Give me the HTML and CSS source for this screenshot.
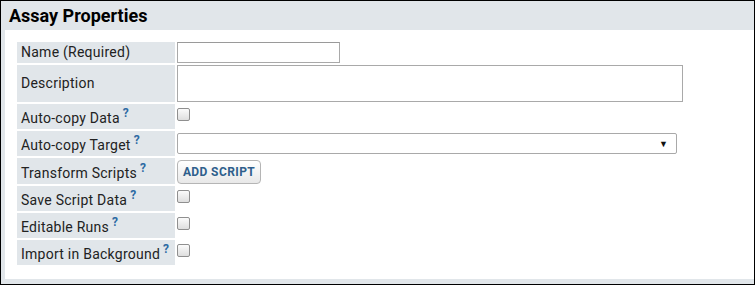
FILE: index.html
```html
<!DOCTYPE html>
<html lang="en">
<head>
    <meta charset="UTF-8">
    <title>Assay Properties</title>
    <link rel="stylesheet" href="styles.css">
</head>
<body>

    <div class="panel">
        <div class="panel-title">Assay Properties</div>

        <div class="panel-body">
            <table class="form-table">
                <tr>
                    <td class="form-label">Name (Required)</td>
                    <td class="form-value"><input type="text" class="text-input"></td>
                </tr>
                <tr>
                    <td class="form-label">Description</td>
                    <td class="form-value"><textarea class="text-area"></textarea></td>
                </tr>
                <tr>
                    <td class="form-label with-help">Auto-copy Data<sup class="help">?</sup></td>
                    <td class="form-value"><span class="check"></span></td>
                </tr>
                <tr>
                    <td class="form-label with-help">Auto-copy Target<sup class="help">?</sup></td>
                    <td class="form-value"><div class="select-box"><span class="arrow">&#9660;</span></div></td>
                </tr>
                <tr>
                    <td class="form-label with-help">Transform Scripts<sup class="help">?</sup></td>
                    <td class="form-value"><button class="add-btn">ADD SCRIPT</button></td>
                </tr>
                <tr>
                    <td class="form-label with-help">Save Script Data<sup class="help">?</sup></td>
                    <td class="form-value"><span class="check"></span></td>
                </tr>
                <tr>
                    <td class="form-label with-help">Editable Runs<sup class="help">?</sup></td>
                    <td class="form-value"><span class="check"></span></td>
                </tr>
                <tr>
                    <td class="form-label with-help">Import in Background<sup class="help">?</sup></td>
                    <td class="form-value"><span class="check"></span></td>
                </tr>
            </table>
        </div>
    </div>

</body>
</html>
```

FILE: styles.css
```css
* {
    margin: 0;
    padding: 0;
    box-sizing: border-box;
}

body {
    font-family: 'Roboto', 'Liberation Sans', sans-serif;
    background-color: #ffffff;
    color: #222222;
}

.panel {
    width: 755px;
    height: 285px;
    border: 1px solid #000000;
    background-color: #e1e6ea;
    display: flex;
    flex-direction: column;
}

.panel-title {
    height: 29px;
    line-height: 29px;
    padding-left: 8px;
    font-size: 18px;
    font-weight: bold;
    color: #000000;
}

.panel-body {
    flex: 1;
    margin-left: 4px;
    margin-bottom: 5px;
    background-color: #ffffff;
    padding: 10px 10px;
}

.form-table {
    border-collapse: separate;
    border-spacing: 2px;
}

.form-label {
    width: 158px;
    height: 21px;
    background-color: #e1e6ea;
    padding: 2px 4px;
    font-size: 14px;
    line-height: 17px;
    letter-spacing: 0.25px;
    vertical-align: middle;
    white-space: nowrap;
}

.form-label.with-help {
    height: 25px;
    padding-top: 6px;
}

.help {
    font-size: 12px;
    font-weight: bold;
    color: #2d6aa3;
    margin-left: 3px;
    line-height: 0;
    vertical-align: 6px;
}

.form-value {
    padding: 0;
    vertical-align: top;
}

.text-input {
    display: block;
    width: 163px;
    height: 21px;
    border: 1px solid #a9a9a9;
    border-top-color: #9a9a9a;
}

.text-area {
    display: block;
    width: 506px;
    height: 37px;
    border: 1px solid #a9a9a9;
    resize: none;
}

.check {
    display: block;
    width: 13px;
    height: 13px;
    margin-top: 4px;
    border: 1px solid #8f8f8f;
    border-radius: 2px;
    background: linear-gradient(#fbfbfb, #dedede);
}

.select-box {
    width: 500px;
    height: 21px;
    margin-top: 2px;
    border: 1px solid #a9a9a9;
    border-radius: 2px;
    display: flex;
    justify-content: flex-end;
    align-items: center;
    padding-right: 8px;
}

.arrow {
    font-size: 9px;
    color: #111111;
}

.add-btn {
    display: block;
    margin-top: 2px;
    width: 84px;
    height: 24px;
    border: 1px solid #b5b5b5;
    border-radius: 4px;
    background: linear-gradient(#ffffff, #e8e8e8);
    font-family: 'Roboto', 'Liberation Sans', sans-serif;
    font-size: 12px;
    font-weight: bold;
    letter-spacing: 0.4px;
    color: #2f5f8c;
}
```
